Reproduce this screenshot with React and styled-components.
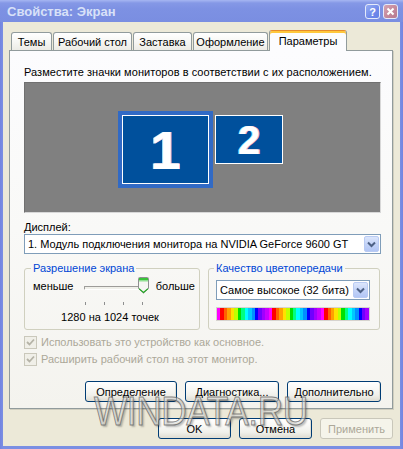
import React from 'react';
import styled, { createGlobalStyle } from 'styled-components';

const Global = createGlobalStyle`
  html, body { margin: 0; padding: 0; background: #fff; }
  body { font-family: "Liberation Sans", Arial, sans-serif; font-size: 11px; color: #000; }
  * { box-sizing: border-box; }
`;

const Window = styled.div`
  position: relative;
  width: 403px;
  height: 449px;
  display: flex;
  flex-direction: column;
  overflow: hidden;
  background: linear-gradient(90deg, #7384E0, #7B8FE3 3px, #7B8FE3 400px, #7384E0);
`;

const TitleBar = styled.div`
  flex: none;
  height: 22px;
  display: flex;
  align-items: center;
  padding: 0 5px 0 7px;
  background: linear-gradient(#A6B6F2, #8598E6 3px, #7D91E3 40%, #7A8EE1);
`;

const Title = styled.div`
  flex: 1;
  font-family: "Liberation Sans", Arial, sans-serif;
  font-weight: bold;
  font-size: 13px;
  color: #D8E1F8;
  padding-top: 1px;
`;

const TitleButtons = styled.div`
  display: flex;
  gap: 3px;
  margin-top: 1px;
`;

const TitleButton = styled.div`
  width: 15px;
  height: 15px;
  border: 1px solid #E4EAFB;
  border-radius: 3px;
  display: flex;
  align-items: center;
  justify-content: center;
  color: #fff;
  font-weight: bold;
  font-size: 11px;
  background: ${p => p.$close
    ? 'linear-gradient(135deg, #D6A3B2, #C2869A 60%, #B77A8F)'
    : 'linear-gradient(135deg, #97ADF3, #6F89EA 60%, #6480E6)'};
`;

const Frame = styled.div`
  flex: 1;
  margin: 0 3px 3px;
  background: #ECE9D8;
  display: flex;
  flex-direction: column;
  padding: 8px 7px 0 6px;
`;

const TabStrip = styled.div`
  display: flex;
  align-items: flex-end;
  gap: 1px;
  margin-left: 2px;
  margin-bottom: -1px;
  position: relative;
  z-index: 1;
`;

const Tab = styled.div`
  width: ${p => p.$w}px;
  height: ${p => (p.$active ? 21 : 18)}px;
  margin-bottom: ${p => (p.$active ? 0 : 1)}px;
  display: flex;
  align-items: center;
  justify-content: center;
  padding-top: ${p => (p.$active ? 0 : 1)}px;
  border: 1px solid #919B9C;
  border-bottom: none;
  border-radius: 3px 3px 0 0;
  white-space: nowrap;
  background: ${p => (p.$active
    ? '#FCFCFE'
    : 'linear-gradient(#FFFFFF, #F7F7F4 50%, #ECEBE5)')};
  ${p => p.$active && `
    border-top: 1px solid #E68B2C;
    box-shadow: inset 0 2px 0 #FFC83C;
  `}
`;

const Panel = styled.div`
  height: 359px;
  flex: none;
  border: 1px solid #919B9C;
  box-shadow: 1px 1px 0 #D0CEBF;
  background: linear-gradient(#FCFCFE, #F9F9F7 50%, #F4F3EE);
  display: flex;
  flex-direction: column;
  padding: 15px 11px 0 14px;
`;

const Text = styled.div`
  line-height: 13px;
  white-space: nowrap;
  color: ${p => (p.$disabled ? '#ACA899' : '#000')};
`;

const Instruction = styled(Text)`
  letter-spacing: 0.05px;
`;

const Canvas = styled.div`
  position: relative;
  margin-top: 3px;
  height: 131px;
  background: #808080;
  border: 1px solid;
  border-color: #707070 #D8D8D8 #D8D8D8 #707070;
`;

const Monitor = styled.div`
  position: absolute;
  left: ${p => p.$x}px;
  top: ${p => p.$y}px;
  width: ${p => p.$w}px;
  height: ${p => p.$h}px;
  background: #00509C;
  border: 1px solid #FFFFFF;
  outline: ${p => (p.$selected ? '4px solid #316AC5' : 'none')};
  display: flex;
  align-items: center;
  justify-content: center;
  color: #fff;
  font-family: "Liberation Sans", Arial, sans-serif;
  font-weight: bold;
  font-size: ${p => p.$fs}px;
  line-height: 1;
  text-shadow: 1px 0 0 #FFB8C8, -1px 0 0 #A8E8FF;
`;

const Label = styled(Text)`
  margin-top: 8px;
`;

const Select = styled.div`
  height: ${p => p.$h || 20}px;
  margin-top: ${p => p.$mt || 0}px;
  border: 1px solid #7F9DB9;
  background: #fff;
  display: flex;
  align-items: center;
  padding: 1px 1px 1px 3px;
`;

const SelectText = styled.div`
  flex: 1;
  min-width: 0;
  white-space: nowrap;
  overflow: hidden;
  font-size: ${p => p.$fs || 11}px;
`;

const DropButton = styled.div`
  flex: none;
  width: 15px;
  height: 100%;
  border: 1px solid #B9CBF3;
  border-radius: 2px;
  background: linear-gradient(#DCE6FC, #C4D4F8 50%, #B2C6F5);
  display: flex;
  align-items: center;
  justify-content: center;
`;

const GroupsRow = styled.div`
  display: flex;
  gap: 8px;
  margin-top: 8px;
`;

const Group = styled.fieldset`
  margin: 0;
  min-width: 0;
  width: ${p => p.$w}px;
  height: 68px;
  border: 1px solid #D0D0BF;
  border-radius: 3px;
  padding: 0 ${p => p.$pr}px 0 ${p => p.$pl}px;
  display: flex;
  flex-direction: column;
`;

const Legend = styled.legend`
  color: #0046D5;
  padding: 0 2px;
  margin-left: -2px;
  line-height: 13px;
`;

const SliderRow = styled.div`
  display: flex;
  align-items: flex-start;
  margin-top: 2px;
  height: 17px;
`;

const SliderLabel = styled.div`
  line-height: 13px;
  padding-top: 3px;
  white-space: nowrap;
`;

const Slider = styled.div`
  position: relative;
  width: 72px;
  height: 17px;
  margin: 0 6px 0 8px;
`;

const Track = styled.div`
  position: absolute;
  left: 3px;
  right: 4px;
  top: 9px;
  height: 4px;
  background: #F0F0EA;
  border: 1px solid;
  border-color: #9D9C99 #FFFFFF #FFFFFF #9D9C99;
  border-radius: 1px;
`;

const Thumb = styled.svg`
  position: absolute;
  left: 57px;
  top: 0;
`;

const Ticks = styled.div`
  display: flex;
  gap: 18px;
  margin: 8px 0 0 52px;
  height: 4px;
`;

const Tick = styled.div`
  width: 1px;
  height: 3px;
  background: #8E8F8F;
`;

const Resolution = styled(Text)`
  text-align: center;
  margin-top: 5px;
  padding-right: 8px;
`;

const ColorBar = styled.div`
  display: flex;
  height: 14px;
  margin-top: 7px;
  border: 1px solid #D6D3CE;
`;

const ColorCell = styled.div`
  flex: 1;
  background: ${p => p.$c};
`;

const CheckRow = styled.div`
  display: flex;
  align-items: center;
  gap: 4px;
  height: 13px;
  margin-top: ${p => p.$mt}px;
`;

const CheckBox = styled.div`
  width: 13px;
  height: 13px;
  border: 1px solid #CAC8BB;
  background: #F0EFE8;
  display: flex;
  align-items: center;
  justify-content: center;
`;

const ButtonRow = styled.div`
  display: flex;
  justify-content: flex-end;
  gap: ${p => p.$gap}px;
  margin-top: ${p => p.$mt}px;
`;

const Button = styled.div`
  width: ${p => p.$w}px;
  height: 21px;
  border: 1px solid ${p => (p.$disabled ? '#C9C7BA' : '#003C74')};
  border-radius: 3px;
  display: flex;
  align-items: center;
  justify-content: center;
  white-space: nowrap;
  color: ${p => (p.$disabled ? '#ACA899' : '#000')};
  background: ${p => (p.$disabled
    ? '#F5F4EA'
    : 'linear-gradient(#FFFFFF, #FAFAF8 30%, #F0F0EA 70%, #E3E1D8 92%, #D6D0C5)')};
  box-shadow: ${p => (p.$disabled ? 'none' : 'inset -1px -1px 0 #E2DFD4')};
`;

const Watermark = styled.div`
  position: absolute;
  left: 94px;
  top: 391px;
  font-family: "Liberation Sans", Arial, sans-serif;
  font-size: 41px;
  line-height: 1;
  letter-spacing: -0.5px;
  color: rgba(225, 225, 222, 0.55);
  -webkit-text-stroke: 1px rgba(95, 95, 95, 0.75);
  text-shadow: 2px 2px 2px rgba(0, 0, 0, 0.25);
  transform: scaleX(0.86);
  transform-origin: left top;
  pointer-events: none;
  white-space: nowrap;
`;

const Chevron = () => (
  <svg width="9" height="7" viewBox="0 0 9 7">
    <polyline points="1,1.5 4.5,5 8,1.5" fill="none" stroke="#4D6185" strokeWidth="2" />
  </svg>
);

const Check = () => (
  <svg width="9" height="9" viewBox="0 0 9 9">
    <polyline points="1,4 3.5,6.5 8,1.5" fill="none" stroke="#B5B3A7" strokeWidth="1.8" />
  </svg>
);

const tabs = [
  { label: 'Темы', w: 41 },
  { label: 'Рабочий стол', w: 79 },
  { label: 'Заставка', w: 59 },
  { label: 'Оформление', w: 75 },
  { label: 'Параметры', w: 78, active: true },
];

const hues = ['#FF00FF', '#FF0000', '#FF6000', '#FFA000', '#FFE000', '#C0FF00', '#00E000', '#00FF80',
  '#00FFFF', '#00C8FF', '#0090FF', '#0000FF', '#7000FF', '#A000FF', '#C800FF'];
const cells = Array.from({ length: 44 }, (_, i) => hues[i % hues.length]);

export default function App() {
  return (
    <>
      <Global />
      <Window>
        <TitleBar>
          <Title>Свойства: Экран</Title>
          <TitleButtons>
            <TitleButton>?</TitleButton>
            <TitleButton $close>
              <svg width="9" height="9" viewBox="0 0 9 9">
                <path d="M1.5 1.5 L7.5 7.5 M7.5 1.5 L1.5 7.5" stroke="#fff" strokeWidth="2" />
              </svg>
            </TitleButton>
          </TitleButtons>
        </TitleBar>
        <Frame>
          <TabStrip>
            {tabs.map(t => (
              <Tab key={t.label} $w={t.w} $active={t.active}>{t.label}</Tab>
            ))}
          </TabStrip>
          <Panel>
            <Instruction>Разместите значки мониторов в соответствии с их расположением.</Instruction>
            <Canvas>
              <Monitor $x={97} $y={32} $w={87} $h={69} $fs={54} $selected>1</Monitor>
              <Monitor $x={190} $y={32} $w={68} $h={49} $fs={40}>2</Monitor>
            </Canvas>
            <Label>Дисплей:</Label>
            <Select $h={20} $mt={0}>
              <SelectText>1. Модуль подключения монитора на NVIDIA GeForce 9600 GT</SelectText>
              <DropButton><Chevron /></DropButton>
            </Select>
            <GroupsRow>
              <Group $w={176} $pl={8} $pr={4}>
                <Legend>Разрешение экрана</Legend>
                <SliderRow>
                  <SliderLabel>меньше</SliderLabel>
                  <Slider>
                    <Track />
                    <Thumb width="11" height="17" viewBox="0 0 11 17">
                      <path d="M1.5 0.5 H9.5 Q10.5 0.5 10.5 1.5 V11.5 L5.5 16 L0.5 11.5 V1.5 Q0.5 0.5 1.5 0.5 Z"
                        fill="#F6F6F2" stroke="#8E8F8F" />
                      <rect x="1" y="1" width="9" height="3" fill="#3AC33A" />
                      <rect x="1" y="3" width="9" height="1.5" fill="#8FE08F" />
                      <path d="M1 11.6 L5.5 15.4 L10 11.6" fill="none" stroke="#22A822" strokeWidth="1.2" />
                    </Thumb>
                  </Slider>
                  <SliderLabel>больше</SliderLabel>
                </SliderRow>
                <Ticks>
                  <Tick /><Tick /><Tick /><Tick />
                </Ticks>
                <Resolution>1280 на 1024 точек</Resolution>
              </Group>
              <Group $w={172} $pl={7} $pr={9}>
                <Legend>Качество цветопередачи</Legend>
                <Select $h={20} $mt={5}>
                  <SelectText $fs={11}>Самое высокое (32 бита)</SelectText>
                  <DropButton><Chevron /></DropButton>
                </Select>
                <ColorBar>
                  {cells.map((c, i) => <ColorCell key={i} $c={c} />)}
                </ColorBar>
              </Group>
            </GroupsRow>
            <CheckRow $mt={6}>
              <CheckBox><Check /></CheckBox>
              <Text $disabled>Использовать это устройство как основное.</Text>
            </CheckRow>
            <CheckRow $mt={4}>
              <CheckBox><Check /></CheckBox>
              <Text $disabled>Расширить рабочий стол на этот монитор.</Text>
            </CheckRow>
            <ButtonRow $gap={8} $mt={15}>
              <Button $w={92}>Определение</Button>
              <Button $w={94}>Диагностика...</Button>
              <Button $w={94}>Дополнительно</Button>
            </ButtonRow>
          </Panel>
          <ButtonRow $gap={8} $mt={9}>
            <Button $w={73}>OK</Button>
            <Button $w={73}>Отмена</Button>
            <Button $w={73} $disabled>Применить</Button>
          </ButtonRow>
        </Frame>
        <Watermark>WINDATA.RU</Watermark>
      </Window>
    </>
  );
}
